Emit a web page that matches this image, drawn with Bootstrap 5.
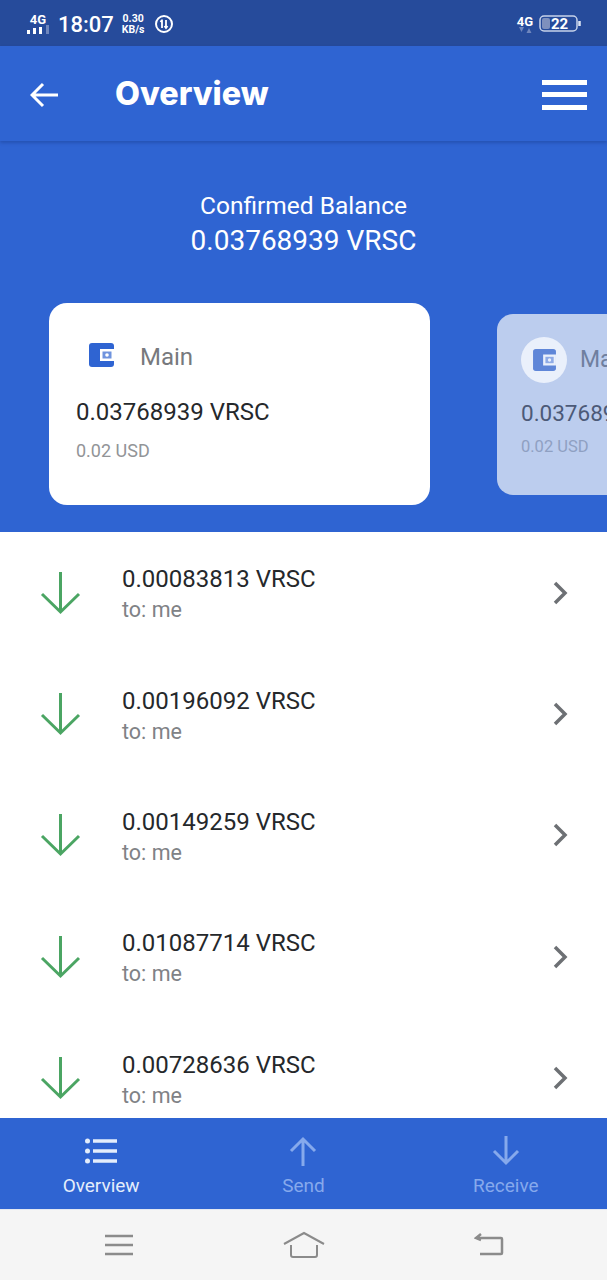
<!DOCTYPE html>
<html lang="en">
<head>
  <meta charset="UTF-8">
  <title>Overview</title>
  <link href="https://cdn.jsdelivr.net/npm/bootstrap@5.3.0/dist/css/bootstrap.min.css" rel="stylesheet">
  <style>
    body { font-family: Roboto, "Liberation Sans", sans-serif; background: #fff; }
    .status-bar { height: 46px; background: #264b9b; color: #fff; padding: 2px 24px 0 26px; }
    .status-time { font-size: 22px; font-weight: 500; margin-left: 8px; margin-right: 8px; }
    .status-speed { font-size: 10.5px; font-weight: 700; line-height: 11px; text-align: center; margin-right: 9px; }
    .status-net { font-size: 13px; font-weight: 700; line-height: 11px; }
    .status-net-right { margin-right: 6px; }
    .top-bar { height: 95px; background: #2f64d2; color: #fff; padding: 2px 20px 0 30px; box-shadow: 0 2px 3px rgba(20, 50, 120, .35); position: relative; }
    .top-title { font-family: Inter, Roboto, sans-serif; font-size: 32.3px; font-weight: 800; margin-left: 57px; margin-bottom: 0; }
    .burger-line { display: block; width: 45px; height: 5px; background: #fff; margin-bottom: 7.500px; }
    .burger-line:last-child { margin-bottom: 0; }
    .hero { height: 391px; background: #2f64d2; color: #fff; }
    .balance-label { font-size: 24.500px; line-height: 30px; padding-top: 50px; }
    .balance-value { font-size: 28px; line-height: 34px; margin-top: 3px; }
    .wallet-track { height: 202px; margin-top: 45px; padding-left: 49px; gap: 67px; }
    .wallet-card { flex: 0 0 381px; height: 202px; background: #fff; border-radius: 18px; padding: 26px 27px 0; }
    .wallet-card.dim { height: 181px; background: #bccdee; padding: 23px 24px 0; border-radius: 16px; }
    .wallet-head { height: 52px; }
    .wallet-card.dim .wallet-head { height: 46px; }
    .wallet-dot { width: 46px; height: 46px; margin-left: 2px; border-radius: 50%; display: flex; align-items: center; justify-content: center; }
    .wallet-card.dim .wallet-dot { background: #eaf0fb; margin-left: 0; }
    .wallet-name { font-size: 24px; color: #77797d; margin-left: 16px; padding-top: 4px; }
    .wallet-card.dim .wallet-name { color: #6f7f9f; margin-left: 13px; font-size: 23px; padding-top: 2px; }
    .wallet-amount { font-size: 24px; line-height: 30px; color: #25282b; white-space: nowrap; margin-top: 16px; }
    .wallet-usd { font-size: 18px; line-height: 24px; color: #929497; margin-top: 12px; white-space: nowrap; }
    .wallet-card.dim .wallet-amount { color: #4c5a78; margin-top: 15px; font-size: 22.500px; }
    .wallet-card.dim .wallet-usd { color: #8fa0c2; margin-top: 7px; font-size: 16.500px; }
    .tx-list { overflow: hidden; }
    .tx-row { flex: 0 0 121.4px; height: 121.4px; padding: 0 39px 0 40px; border: 0; }
    .tx-text { margin-left: 41px; padding-top: 3px; }
    .tx-amount { font-size: 24px; line-height: 30px; color: #25282b; }
    .tx-to { font-size: 21.500px; line-height: 28px; color: #808286; margin-top: 2px; }
    .bottom-tabs { height: 92px; background: #2f64d2; border-bottom: 1px solid #e4e8f2; flex: 0 0 92px; }
    .tab-item { width: 202px; color: #86a9ec; font-size: 19px; line-height: 24px; }
    .tab-item.active { color: #e4edfb; }
    .tab-icon { height: 36px; margin-top: 3px; margin-bottom: 5px; }
    .soft-keys { height: 70px; flex: 0 0 70px; background: #f5f5f5; }
    .soft-key { width: 185px; }
  </style>
</head>
<body>
  <div class="d-flex flex-column vh-100 overflow-hidden">

    <div class="status-bar d-flex align-items-center flex-shrink-0">
      <div class="status-net text-center">
        <div>4G</div>
        <svg width="24" height="9" viewBox="0 0 24 9" class="d-block"><rect x="1" y="5" width="3" height="4" fill="#fff"/><rect x="7" y="3" width="3" height="6" fill="#fff"/><rect x="13" y="2" width="3" height="7" fill="#fff"/><rect x="20" y="0" width="3" height="9" fill="#6f86bd"/></svg>
      </div>
      <span class="status-time">18:07</span>
      <div class="status-speed"><div>0.30</div><div>KB/s</div></div>
      <svg width="20" height="20" viewBox="0 0 20 20" fill="none" stroke="#fff"><circle cx="10" cy="10" r="8" stroke-width="2"/><path d="M8 6L6.500 8M8 5.500V14M12 6V14M10.500 12L12 14L13.500 12" stroke-width="1.800"/></svg>
      <div class="ms-auto d-flex align-items-center">
        <div class="status-net status-net-right text-center"><div>4G</div><svg width="14" height="6" viewBox="0 0 14 6" class="d-block mx-auto"><path d="M1 0H6L3.500 5ZM11 1L13.500 6H8.500Z" fill="#6f86bd"/></svg></div>
        <svg width="44" height="18" viewBox="0 0 44 18" fill="none"><rect x="1" y="1" width="37" height="15" rx="4" stroke="#c6d2ea" stroke-width="1.500"/><rect x="3" y="3" width="8" height="11" rx="2" fill="#7e90bd"/><path d="M40.500 6V11" stroke="#dce4f4" stroke-width="2.500"/><text x="12" y="14" fill="#fff" font-size="15" font-weight="700" font-family="Roboto, sans-serif">22</text></svg>
      </div>
    </div>

    <nav class="top-bar d-flex align-items-center flex-shrink-0">
      <svg width="28" height="26" viewBox="0 0 28 26" fill="none" stroke="#fff" stroke-width="3"><path d="M28 13H2M13 2L2 13L13 24"/></svg>
      <h1 class="top-title">Overview</h1>
      <div class="ms-auto">
        <span class="burger-line"></span>
        <span class="burger-line"></span>
        <span class="burger-line"></span>
      </div>
    </nav>

    <section class="hero flex-shrink-0 overflow-hidden">
      <div class="text-center">
        <div class="balance-label">Confirmed Balance</div>
        <div class="balance-value">0.03768939 VRSC</div>
      </div>
      <div class="wallet-track d-flex align-items-center">
        <div class="wallet-card">
          <div class="wallet-head d-flex align-items-center">
            <div class="wallet-dot">
              <svg width="25" height="24" viewBox="0 0 25 24"><rect width="25" height="24" rx="3" fill="#2f64d2"/><rect x="11" y="6" width="14" height="12" fill="#fff"/><rect x="13.500" y="8.500" width="9" height="7" fill="#6f93de"/><circle cx="18" cy="12" r="1.800" fill="#fff"/></svg>
            </div>
            <span class="wallet-name">Main</span>
          </div>
          <div class="wallet-amount">0.03768939 VRSC</div>
          <div class="wallet-usd">0.02 USD</div>
        </div>
        <div class="wallet-card dim">
          <div class="wallet-head d-flex align-items-center">
            <div class="wallet-dot">
              <svg width="23" height="22" viewBox="0 0 25 24"><rect width="25" height="24" rx="3" fill="#5f86d8"/><rect x="11" y="6" width="14" height="12" fill="#eaf0fb"/><rect x="13.500" y="8.500" width="9" height="7" fill="#8fabe6"/><circle cx="18" cy="12" r="1.800" fill="#eaf0fb"/></svg>
            </div>
            <span class="wallet-name">Main</span>
          </div>
          <div class="wallet-amount">0.03768939 VRSC</div>
          <div class="wallet-usd">0.02 USD</div>
        </div>
      </div>
    </section>

    <div class="tx-list list-group list-group-flush rounded-0 flex-grow-1" id="txList"></div>

    <div class="bottom-tabs d-flex justify-content-around align-items-center">
      <div class="tab-item active text-center">
        <svg class="tab-icon d-block mx-auto" width="34" height="36" viewBox="0 0 34 36" fill="none" stroke="#e4edfb"><circle cx="3.500" cy="8" r="2.500" fill="#e4edfb" stroke="none"/><circle cx="3.500" cy="18" r="2.500" fill="#e4edfb" stroke="none"/><circle cx="3.500" cy="28" r="2.500" fill="#e4edfb" stroke="none"/><path d="M9 8H33M9 18H33M9 28H33" stroke-width="3.500"/></svg>
        Overview
      </div>
      <div class="tab-item text-center">
        <svg class="tab-icon d-block mx-auto" width="28" height="36" viewBox="0 0 28 36" fill="none" stroke="#86a9ec" stroke-width="3"><path d="M14 33V6M2 18L14 6L26 18"/></svg>
        Send
      </div>
      <div class="tab-item text-center">
        <svg class="tab-icon d-block mx-auto" width="28" height="36" viewBox="0 0 28 36" fill="none" stroke="#86a9ec" stroke-width="3"><path d="M14 3V30M2 18L14 30L26 18"/></svg>
        Receive
      </div>
    </div>

    <div class="soft-keys d-flex justify-content-center align-items-center">
      <div class="soft-key text-center"><svg width="30" height="24" viewBox="0 0 30 24" fill="none" stroke="#8b8b8b" stroke-width="2.500"><path d="M1 3H29M1 12H29M1 21H29"/></svg></div>
      <div class="soft-key text-center"><svg width="42" height="28" viewBox="0 0 42 28" fill="none" stroke="#8b8b8b" stroke-width="2"><path d="M1 13L21 2L41 13M8 14V24Q8 26 10 26H32Q34 26 34 24V14"/></svg></div>
      <div class="soft-key text-center"><svg width="30" height="24" viewBox="0 0 30 24" fill="none" stroke="#8b8b8b" stroke-width="2.500"><path d="M3 5H27Q28 5 28 6V20Q28 21 27 21H6M7 1L2 5L7 7"/></svg></div>
    </div>
  </div>

  <script src="https://cdn.jsdelivr.net/npm/bootstrap@5.3.0/dist/js/bootstrap.bundle.min.js"></script>
  <script>
    const amounts = ['0.00083813', '0.00196092', '0.00149259', '0.01087714', '0.00728636'];
    document.getElementById('txList').innerHTML = amounts.map(a => `
      <div class="tx-row list-group-item d-flex align-items-center">
        <svg width="41" height="44" viewBox="0 0 41 44" fill="none" stroke="#4ba563" stroke-width="3"><path d="M20.500 1V41M2 23L20.500 41L39 23"/></svg>
        <div class="tx-text flex-grow-1">
          <div class="tx-amount">${a} VRSC</div>
          <div class="tx-to">to: me</div>
        </div>
        <svg width="15" height="24" viewBox="0 0 15 24" fill="none" stroke="#6d7074" stroke-width="3.500"><path d="M2 2L12 12L2 22"/></svg>
      </div>`).join('');
  </script>
</body>
</html>
